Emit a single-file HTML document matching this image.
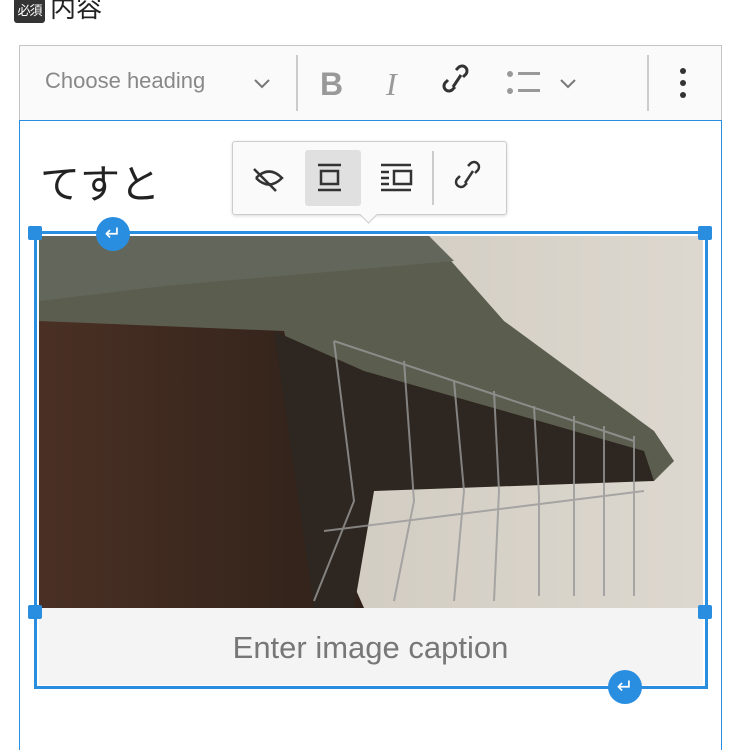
<!DOCTYPE html>
<html><head><meta charset="utf-8"><style>
body{margin:0;width:740px;height:740px;background:#fff;position:relative;overflow:hidden;font-family:"Liberation Sans","Noto Sans CJK JP",sans-serif}
.a{position:absolute}
.h{position:absolute;width:14px;height:14px;background:#2a8ee0;border-radius:2px}
</style></head><body>
<div class="a" style="left:14px;top:-2px;width:31px;height:25px;background:#333;border-radius:3px;color:#fff;font-size:13px;line-height:25px;text-align:center;letter-spacing:-1px;white-space:nowrap;overflow:hidden">必須</div>
<div class="a" style="left:50px;top:-12px;font-size:26px;color:#222">内容</div>
<div class="a" style="left:19px;top:45px;width:701px;height:74px;background:#fafafa;border:1px solid #c4c4c4;border-bottom:1px solid #2a8ee0"></div>
<div class="a" style="left:45px;top:68px;font-size:22px;color:#888">Choose heading</div>
<svg class="a" style="left:0;top:45px" width="740" height="75">
<path d="M255 35l7 7 7-7" stroke="#777" stroke-width="2" fill="none"/>
<line x1="297" y1="10" x2="297" y2="66" stroke="#ccc" stroke-width="2"/>
<line x1="648" y1="10" x2="648" y2="66" stroke="#ccc" stroke-width="2"/>
<text x="320" y="50" font-size="32" font-weight="bold" fill="#999" font-family="Liberation Sans">B</text>
<text x="386" y="50" font-size="32" font-style="italic" fill="#999" font-family="Liberation Serif">I</text>
<g stroke="#333" stroke-width="3" fill="none"><path d="M455 42l-3 3a5 5 0 0 1-7-7l3-3M463 32l3-3a5 5 0 0 0-7-7l-3 3M453 42l8-12"/></g>
<g fill="#999"><circle cx="510" cy="29" r="3"/><circle cx="510" cy="46" r="3"/><rect x="518" y="27" width="22" height="3"/><rect x="518" y="44" width="22" height="3"/></g>
<path d="M561 35l7 7 7-7" stroke="#777" stroke-width="2" fill="none"/>
<g fill="#333"><circle cx="683" cy="26" r="3"/><circle cx="683" cy="38" r="3"/><circle cx="683" cy="50" r="3"/></g>
</svg>
<div class="a" style="left:19px;top:120px;width:701px;height:630px;border-left:1px solid #2a8ee0;border-right:1px solid #2a8ee0"></div>
<div class="a" style="left:40px;top:152px;font-size:40px;color:#222">てすと</div>
<svg class="a" style="left:34px;top:231px" width="674" height="458">
<defs>
<linearGradient id="w" x1="0" x2="1"><stop offset="0" stop-color="#c9c3b8"/><stop offset="1" stop-color="#ddd8cf"/></linearGradient>
<linearGradient id="br" x1="0" x2="1"><stop offset="0" stop-color="#4a3024"/><stop offset="1" stop-color="#2f2119"/></linearGradient>
</defs>
<rect x="5" y="5" width="664" height="372" fill="url(#w)"/>
<polygon points="5,5 395,5 470,90 620,200 640,230 620,250 330,250 5,150" fill="#5b5d4f"/>
<polygon points="5,90 250,100 300,310 330,377 5,377" fill="url(#br)"/>
<polygon points="240,100 330,140 610,220 620,250 340,260 320,377 280,377" fill="#2e2620"/>
<polygon points="5,5 395,5 420,30 130,55 5,70" fill="#63665a"/>
<g stroke="#999" stroke-width="2" fill="none" opacity=".8">
<path d="M300 110l20 160-40 100M370 130l10 140-20 100M420 150l10 110-10 110M460 160l5 100-5 110M500 175l5 90 0 100M540 185l0 180M570 195l0 170M600 205l0 160"/>
<path d="M300 110l300 100M290 300l320-40"/>
</g>
<rect x="5" y="377" width="664" height="77" fill="#f4f4f4"/>
<rect x="1.5" y="1.5" width="671" height="455" fill="none" stroke="#2a8ee0" stroke-width="3"/>
</svg>
<div class="h" style="left:28px;top:226px"></div>
<div class="h" style="left:698px;top:226px"></div>
<div class="h" style="left:28px;top:605px"></div>
<div class="h" style="left:698px;top:605px"></div>
<div class="a" style="left:96px;top:217px;width:34px;height:34px;border-radius:50%;background:#2a8ee0;color:#fff;font-size:20px;text-align:center;line-height:34px">↵</div>
<div class="a" style="left:608px;top:670px;width:34px;height:34px;border-radius:50%;background:#2a8ee0;color:#fff;font-size:20px;text-align:center;line-height:34px">↵</div>
<div class="a" style="left:37px;top:630px;width:667px;text-align:center;font-size:31px;color:#777">Enter image caption</div>
<div class="a" style="left:232px;top:141px;width:273px;height:72px;background:#fafafa;border:1px solid #ccc;border-radius:3px;box-shadow:0 1px 3px rgba(0,0,0,.15)"></div>
<div class="a" style="left:362px;top:208px;width:12px;height:12px;background:#fafafa;border-right:1px solid #ccc;border-bottom:1px solid #ccc;transform:rotate(45deg)"></div>
<div class="a" style="left:305px;top:150px;width:56px;height:56px;background:#e0e0e0;border-radius:3px"></div>
<svg class="a" style="left:232px;top:141px" width="273" height="72">
<g stroke="#333" stroke-width="2.5" fill="none">
<path d="M24 37q13-13 26 0q-13 13-26 0M22 28l22 22"/>
<path d="M86 24h23M86 49h23"/><rect x="89" y="30" width="17" height="13"/>
<path d="M149 24h30M149 49h30M149 31h8M149 37h8M149 43h8"/><rect x="162" y="30" width="17" height="13"/>
<path d="M235 42l-3 3a5 5 0 0 1-7-7l3-3M243 32l3-3a5 5 0 0 0-7-7l-3 3M233 42l8-12"/>
</g>
<line x1="201" y1="10" x2="201" y2="64" stroke="#ccc" stroke-width="2"/>
</svg>
</body></html>
